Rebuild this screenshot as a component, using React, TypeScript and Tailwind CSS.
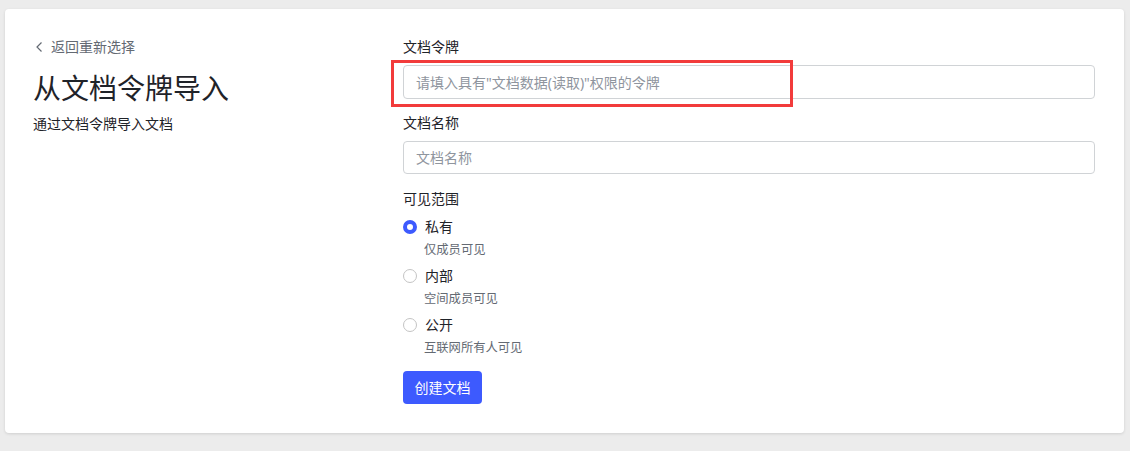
import React from "react";

const font = { fontFamily: '"Noto Sans", "Noto Sans CJK SC", sans-serif' };

function Radio({ checked, label, desc }: { checked?: boolean; label: string; desc: string }) {
  return (
    <div className="flex flex-col">
      <div className="flex items-center h-[20px]">
        {checked ? (
          <span className="w-[14px] h-[14px] rounded-full border-[4px] border-[#3d5afe] bg-white box-border" />
        ) : (
          <span className="w-[14px] h-[14px] rounded-full border border-[#c4c4c4] bg-white box-border" />
        )}
        <span className="ml-[8px] text-[14px] text-[#1f2329] leading-[20px]">{label}</span>
      </div>
      <div className="pl-[21px] mt-[3px] text-[12.3px] text-[#646a73] leading-[20px]">{desc}</div>
    </div>
  );
}

export default function App() {
  return (
    <div className="w-[1130px] h-[451px] bg-[#ececec] pt-[9px] px-[5px]" style={font}>
      <div className="bg-white rounded-[4px] shadow-[0_1px_3px_rgba(0,0,0,0.12)] h-[424px] w-[1119px] flex pl-[28px] pt-[28px]">
        <div className="w-[370px] flex flex-col">
          <div className="flex items-center text-[14px] text-[#646a73] leading-[20px] h-[20px] mt-[0px]">
            <svg width="12" height="12" viewBox="0 0 12 12" className="ml-[1px] mr-[5px]">
              <path d="M7.5 1.5 L3 6 L7.5 10.5" fill="none" stroke="#646a73" strokeWidth="1.2" />
            </svg>
            返回重新选择
          </div>
          <div className="mt-[11px] text-[28px] leading-[40px] text-[#1f2329]">从文档令牌导入</div>
          <div className="mt-[6px] text-[14px] leading-[20px] text-[#1f2329]">通过文档令牌导入文档</div>
        </div>
        <div className="flex flex-col w-[692px] relative">
          <div className="text-[14px] leading-[20px] text-[#1f2329]">文档令牌</div>
          <div className="mt-[8px] h-[34px] border border-[#d0d3d6] rounded-[4px] flex items-center px-[12px] text-[14px] text-[#8f959e]">
            请填入具有"文档数据(读取)"权限的令牌
          </div>
          <div className="absolute left-[-12px] top-[23px] w-[402px] h-[47px] border-[3px] border-[#f23b3b]" />
          <div className="mt-[14px] text-[14px] leading-[20px] text-[#1f2329]">文档名称</div>
          <div className="mt-[8px] h-[33px] border border-[#d0d3d6] rounded-[4px] flex items-center px-[12px] text-[14px] text-[#8f959e]">
            文档名称
          </div>
          <div className="mt-[15px] text-[14px] leading-[20px] text-[#1f2329]">可见范围</div>
          <div className="mt-[8px] flex flex-col gap-[6px]">
            <Radio checked label="私有" desc="仅成员可见" />
            <Radio label="内部" desc="空间成员可见" />
            <Radio label="公开" desc="互联网所有人可见" />
          </div>
          <button className="mt-[13px] w-[79px] h-[33px] rounded-[4px] bg-[#3d5afe] text-white text-[14px] flex items-center justify-center">
            创建文档
          </button>
        </div>
      </div>
    </div>
  );
}
